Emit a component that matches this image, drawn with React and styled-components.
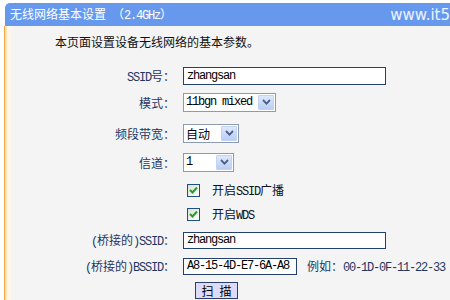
import React from "react";
import styled, { createGlobalStyle } from "styled-components";

const GlobalStyle = createGlobalStyle`
  html, body { margin: 0; padding: 0; background: #ffffff; }
  body {
    font-family: "Noto Sans CJK SC", "Liberation Sans", sans-serif;
    font-size: 12px;
    color: #111111;
  }
  * { box-sizing: border-box; }
`;

const Page = styled.div`
  width: 450px;
  height: 300px;
  overflow: hidden;
  padding-top: 3px;
  display: flex;
  flex-direction: column;
`;

const Header = styled.div`
  margin-left: 5px;
  height: 23px;
  flex-shrink: 0;
  background: #6699ee;
  border-top-left-radius: 5px;
  display: flex;
  align-items: center;
  justify-content: space-between;
  padding-left: 5px;
  color: #ffffff;
  white-space: nowrap;
`;

const Title = styled.span`
  font-size: 12px;
  line-height: 23px;
`;

const Watermark = styled.span`
  font-family: "DejaVu Sans", Verdana, sans-serif;
  font-size: 15px;
  line-height: 23px;
  color: #eef3ff;
  padding-top: 1px;
`;

const Body = styled.div`
  flex: 1;
  margin-left: 4px;
  border-left: 1px solid #f0a848;
  background: linear-gradient(
    to right,
    #fcdca6 0px,
    #fde9c8 2px,
    #fff8ea 2px,
    #fff8ea 6px,
    #f4f4f4 6px
  );
  padding-top: 6px;
`;

const Intro = styled.div`
  padding-left: 50px;
  height: 20px;
  line-height: 20px;
  color: #111111;
`;

const Row = styled.div`
  display: flex;
  align-items: center;
  height: 20px;
  margin-top: ${(p) => p.$mt}px;
  padding-left: ${(p) => p.$pl || 0}px;
`;

const Label = styled.div`
  width: 170px;
  margin-right: 8px;
  flex-shrink: 0;
  text-align: right;
  color: #1f3764;
  white-space: nowrap;
`;

const Latin = styled.span`
  font-family: "Liberation Mono", monospace;
  font-size: 12px;
  letter-spacing: -1.2px;
  white-space: pre;
`;

const TextBox = styled.div`
  width: ${(p) => p.$w}px;
  height: ${(p) => p.$h || 18}px;
  border: 1px solid #22416f;
  background: #ffffff;
  display: flex;
  align-items: center;
  padding-left: 3px;
  font-family: "Liberation Mono", monospace;
  font-size: 12px;
  letter-spacing: -1.2px;
  color: #000000;
  white-space: nowrap;
  overflow: hidden;
`;

const SelectBox = styled.div`
  width: ${(p) => p.$w}px;
  height: 19px;
  border: 1px solid #8d9bb0;
  background: #ffffff;
  display: flex;
  align-items: stretch;
`;

const SelectText = styled.div`
  flex: 1;
  display: flex;
  align-items: center;
  padding-left: 2px;
  color: #000000;
  white-space: nowrap;
  overflow: hidden;
`;

const SelectArrow = styled.div`
  width: 16px;
  margin: 1px;
  border: 1px solid #c3d3f3;
  border-radius: 1px;
  background: linear-gradient(#dfe8fc, #b9cdf5);
  display: flex;
  align-items: center;
  justify-content: center;
`;

const CheckBox = styled.div`
  width: 13px;
  height: 13px;
  border: 1px solid #1c5180;
  background: linear-gradient(135deg, #dcdcd7, #ffffff);
  display: flex;
  align-items: center;
  justify-content: center;
  margin-right: 12px;
`;

const CheckText = styled.span`
  color: #111111;
  white-space: nowrap;
`;

const Example = styled.span`
  margin-left: 10px;
  color: #1f3764;
  white-space: nowrap;
`;

const ScanButton = styled.div`
  width: 43px;
  height: 17px;
  border: 1px solid #2a3f6e;
  background: #dcdcf8;
  display: flex;
  align-items: center;
  justify-content: center;
  font-size: 12px;
  color: #000000;
  white-space: pre;
`;

function Mixed({ text }) {
  const parts = text.split(/([ -~]+)/);
  return parts.map((p, i) =>
    /^[ -~]+$/.test(p) ? <Latin key={i}>{p}</Latin> : <React.Fragment key={i}>{p}</React.Fragment>
  );
}

function Chevron() {
  return (
    <svg width="9" height="6" viewBox="0 0 9 6">
      <path d="M1 1 L4.5 4.6 L8 1" fill="none" stroke="#4a5f86" strokeWidth="1.8" />
    </svg>
  );
}

function Select({ w, value }) {
  return (
    <SelectBox $w={w}>
      <SelectText>
        <Mixed text={value} />
      </SelectText>
      <SelectArrow>
        <Chevron />
      </SelectArrow>
    </SelectBox>
  );
}

function Check({ label }) {
  return (
    <>
      <CheckBox>
        <svg width="9" height="8" viewBox="0 0 9 8">
          <path d="M1 4 L3.5 6.5 L8 1.5" fill="none" stroke="#21a121" strokeWidth="2" />
        </svg>
      </CheckBox>
      <CheckText>
        <Mixed text={label} />
      </CheckText>
    </>
  );
}

export default function App() {
  return (
    <>
      <GlobalStyle />
      <Page>
        <Header>
          <Title>
            <Mixed text="无线网络基本设置 （2.4GHz）" />
          </Title>
          <Watermark>www.it5</Watermark>
        </Header>
        <Body>
          <Intro>本页面设置设备无线网络的基本参数。</Intro>

          <Row $mt={14}>
            <Label>
              <Mixed text="SSID号：" />
            </Label>
            <TextBox $w={203}>zhangsan</TextBox>
          </Row>

          <Row $mt={6}>
            <Label>模式：</Label>
            <Select w={93} value="11bgn mixed" />
          </Row>

          <Row $mt={11}>
            <Label>频段带宽：</Label>
            <Select w={56} value="自动" />
          </Row>

          <Row $mt={9}>
            <Label>信道：</Label>
            <Select w={51} value="1" />
          </Row>

          <Row $mt={8} $pl={182}>
            <Check label="开启SSID广播" />
          </Row>

          <Row $mt={4} $pl={182}>
            <Check label="开启WDS" />
          </Row>

          <Row $mt={6}>
            <Label>
              <Mixed text="(桥接的)SSID：" />
            </Label>
            <TextBox $w={203} $h={17}>zhangsan</TextBox>
          </Row>

          <Row $mt={6}>
            <Label>
              <Mixed text="(桥接的)BSSID：" />
            </Label>
            <TextBox $w={114} $h={17}>A8-15-4D-E7-6A-A8</TextBox>
            <Example>
              <Mixed text="例如：00-1D-0F-11-22-33" />
            </Example>
          </Row>

          <Row $mt={4} $pl={190}>
            <ScanButton>
              <Mixed text="扫 描" />
            </ScanButton>
          </Row>
        </Body>
      </Page>
    </>
  );
}
